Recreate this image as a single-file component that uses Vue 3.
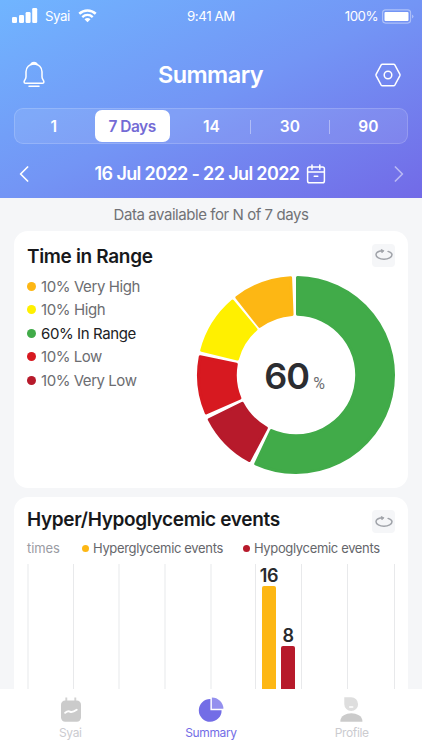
<script setup>
const ranges = [
  { label: '10% Very High', color: '#fdb714', from: 321.8, to: 357.7 },
  { label: '10% High', color: '#fff000', from: 283.8, to: 320.2 },
  { label: '60% In Range', color: '#41ab49', from: 0, to: 205.3, strong: true },
  { label: '10% Low', color: '#d71920', from: 246.2, to: 281.7 },
  { label: '10% Very Low', color: '#b71a2b', from: 207.8, to: 243.7 },
]

// Ring segment, inset on all sides so a round-joined stroke can soften its corners
function segment(from, to) {
  const inset = 1.5
  const outer = 99 - inset
  const inner = 59.2 + inset
  const point = (r, angle, side) => {
    const a = (angle * Math.PI) / 180 + side * Math.asin(inset / r)
    return `${(r * Math.sin(a)).toFixed(2)} ${(-r * Math.cos(a)).toFixed(2)}`
  }
  const large = to - from > 180 ? 1 : 0
  return `M${point(outer, from, 1)}A${outer} ${outer} 0 ${large} 1 ${point(outer, to, -1)}L${point(inner, to, -1)}A${inner} ${inner} 0 ${large} 0 ${point(inner, from, 1)}Z`
}

const periods = ['1', '7 Days', '14', '30', '90']
const days = [
  { soft: true }, {}, { soft: true }, { soft: true }, { soft: true },
  { high: 16, low: 8 }, {}, {}, {},
]
</script>

<template>
  <div class="screen">
    <header class="top">
      <div class="status">
        <div class="carrier">
          <svg width="26" height="16" viewBox="0 0 26 16" fill="#fff">
            <rect x="0" y="9" width="5" height="6" rx="1.3" />
            <rect x="7" y="7" width="5" height="8" rx="1.3" />
            <rect x="13.6" y="4" width="5" height="11" rx="1.3" />
            <rect x="20.2" y="0" width="5" height="15" rx="1.3" />
          </svg>
          <span class="network">Syai</span>
          <svg class="wifi" width="19" height="14" viewBox="0 0 20 15" fill="none" stroke="#fff">
            <path d="M1.2 5.1C6.2.4 13.8.4 18.8 5.1" stroke-width="2.7" />
            <path d="M4.4 8.6c3.2-3 8-3 11.2 0" stroke-width="2.5" />
            <path d="M6.8 11c1.9-1.7 4.5-1.7 6.4 0L10 14.1Z" fill="#fff" stroke="none" />
          </svg>
        </div>
        <span class="clock">9:41 AM</span>
        <div class="power">
          <span>100%</span>
          <svg width="32" height="15" viewBox="0 0 32 15" fill="none">
            <rect x=".6" y=".9" width="28" height="13.2" rx="3" stroke="#fff" stroke-opacity=".42" stroke-width="1.1" />
            <rect x="2.5" y="2.9" width="24" height="9.2" rx="1" fill="#fff" />
            <path d="M30 5.5q3 2 0 4z" fill="#fff" fill-opacity=".42" />
          </svg>
        </div>
      </div>

      <div class="heading">
        <svg width="22" height="28" viewBox="0 0 22 28" fill="none" stroke="#fff" stroke-width="1.5" stroke-linecap="round" stroke-linejoin="round">
          <path d="M8.1 3.6C8.5.8 13.5.8 13.9 3.6" fill="#fff" />
          <path d="M11 3.1c-4.7 0-8 3.4-8 7.7v4.9c0 2.5-1.9 3.5-1.9 5.2 0 .8.5 1.3 1.4 1.3h17c.9 0 1.4-.5 1.4-1.3 0-1.7-1.9-2.7-1.9-5.2v-4.9c0-4.3-3.3-7.7-8-7.7Z" />
          <path d="M6 25.2h10" />
        </svg>
        <h1>Summary</h1>
        <svg width="26" height="24" viewBox="0 0 26 24" fill="none" stroke="#fff" stroke-width="1.5" stroke-linejoin="round">
          <path d="M7.4 1.2h11.2q.8 0 1.2.7l5 9.3q.4.8 0 1.6l-5 9.3q-.4.7-1.2.7H7.4q-.8 0-1.2-.7l-5-9.3q-.4-.8 0-1.6l5-9.3q.4-.7 1.2-.7Z" />
          <circle cx="13" cy="12" r="3.8" />
        </svg>
      </div>

      <nav class="periods">
        <button v-for="(p, i) in periods" :key="p" :class="{ active: i === 1, divided: i > 2 }">{{ p }}</button>
      </nav>

      <div class="dates">
        <svg width="10" height="16" viewBox="0 0 10 16" fill="none" stroke="#fff" stroke-width="1.7" stroke-linecap="round" stroke-linejoin="round"><path d="m8.6 1-7 7 7 7" /></svg>
        <div class="range">
          <span>16 Jul 2022 - 22 Jul 2022</span>
          <svg width="20" height="20" viewBox="0 0 20 20" fill="none" stroke="#fff" stroke-width="1.5" stroke-linecap="round">
            <rect x="1.6" y="3" width="16.8" height="15.7" rx="1.8" />
            <path d="M1.8 8h16.4M6 1v4.3M13.8 1v4.3M8.2 12.3h3.6" />
          </svg>
        </div>
        <svg class="next" width="10" height="16" viewBox="0 0 10 16" fill="none" stroke="#fff" stroke-width="1.7" stroke-linecap="round" stroke-linejoin="round"><path d="m1.4 1 7 7-7 7" /></svg>
      </div>
    </header>

    <main>
      <p class="note">Data available for N of 7 days</p>

      <section class="card time">
        <div class="card-head">
          <h2>Time in Range</h2>
          <button class="rotate">
            <svg width="18" height="12" viewBox="0 0 18 12" fill="none" stroke="#a0a3a9" stroke-width="1.5" stroke-linecap="round" stroke-linejoin="round">
              <path d="M13.1 2.4c2.4.7 3.9 1.8 3.9 3.4 0 2.5-3.6 4.4-8 4.4S1 8.3 1 5.8c0-2.2 2.6-3.6 6-4" />
              <path d="M6.6.7 8.9 1.8 7.2 3.5Z" fill="#a0a3a9" stroke-width="1" />
            </svg>
          </button>
        </div>
        <div class="breakdown">
          <ul>
            <li v-for="r in ranges" :key="r.label" :class="{ strong: r.strong }">
              <i :style="{ background: r.color }"></i>{{ r.label }}
            </li>
          </ul>
          <div class="donut">
            <svg width="200" height="200" viewBox="-100 -100 200 200">
              <path v-for="r in ranges" :key="r.label" :d="segment(r.from, r.to)" :fill="r.color" :stroke="r.color" stroke-width="3" stroke-linejoin="round" />
            </svg>
            <div class="total"><b>60</b><span>%</span></div>
          </div>
        </div>
      </section>

      <section class="card events">
        <div class="card-head">
          <h2>Hyper/Hypoglycemic events</h2>
          <button class="rotate">
            <svg width="18" height="12" viewBox="0 0 18 12" fill="none" stroke="#a0a3a9" stroke-width="1.5" stroke-linecap="round" stroke-linejoin="round">
              <path d="M13.1 2.4c2.4.7 3.9 1.8 3.9 3.4 0 2.5-3.6 4.4-8 4.4S1 8.3 1 5.8c0-2.2 2.6-3.6 6-4" />
              <path d="M6.6.7 8.9 1.8 7.2 3.5Z" fill="#a0a3a9" stroke-width="1" />
            </svg>
          </button>
        </div>
        <div class="legend">
          <span class="unit">times</span>
          <span class="key hyper"><i></i>Hyperglycemic events</span>
          <span class="key hypo"><i></i>Hypoglycemic events</span>
        </div>
        <div class="chart">
          <div v-for="(d, i) in days" :key="i" class="day" :class="{ soft: d.soft }">
            <template v-if="d.high">
              <div class="bar high"><b>{{ d.high }}</b><i></i></div>
              <div class="bar low"><b>{{ d.low }}</b><i></i></div>
            </template>
          </div>
        </div>
      </section>
    </main>

    <footer>
      <a class="tab">
        <svg width="20" height="26" viewBox="0 0 20 26">
          <path d="M5.3.5v5M14.3.5v5" stroke="#d2d2d2" stroke-width="1.9" />
          <rect x="0" y="3.6" width="20" height="21.2" rx="4.2" fill="#cbcbcb" />
          <path d="M4.2 15.8c2.1-1.8 3.3-2.1 4.7-1.2 1.9 1.3 3.9.2 6.8-1.8" fill="none" stroke="#fff" stroke-width="2" stroke-linecap="round" />
        </svg>
        <span>Syai</span>
      </a>
      <a class="tab active">
        <svg width="26" height="26" viewBox="0 0 26 26">
          <path d="M12.4 2v11.2h11.2A11.4 11.4 0 1 1 12.4 2Z" fill="#736de6" />
          <path d="M13.9.4A11.6 11.6 0 0 1 25.4 11.8H13.9Z" fill="#9490ee" />
        </svg>
        <span>Summary</span>
      </a>
      <a class="tab">
        <svg width="24" height="26" viewBox="0 0 24 26">
          <path d="M4.3.3h6.9a6.9 6.9 0 1 1-6.9 6.9Z" fill="#dedede" />
          <path d="M9.7 10h3" fill="none" stroke="#fff" stroke-width="1.5" stroke-linecap="round" />
          <path d="M.4 24.7v-.9C.4 19 6 16.2 11.3 16.2s11.1 2.8 11.1 7.6v.9Z" fill="#cbcbcb" />
        </svg>
        <span>Profile</span>
      </a>
    </footer>
  </div>
</template>

<style>
body { margin: 0; }
</style>

<style scoped>
* { box-sizing: border-box; }
.screen {
  display: flex;
  flex-direction: column;
  width: 422px;
  height: 750px;
  overflow: hidden;
  background: #f5f6f8;
  font-family: Inter, "Liberation Sans", sans-serif;
  white-space: nowrap;
}
h1, h2, p, ul { margin: 0; padding: 0; }
button { border: 0; padding: 0; background: none; font: inherit; }
svg { display: block; flex: none; }
.top {
  flex: none;
  height: 198px;
  color: #fff;
  background: linear-gradient(to bottom right, #70b5ff 0%, #7395f5 50%, #726ae7 100%);
}
.status {
  display: grid;
  grid-template-columns: 1fr auto 1fr;
  align-items: center;
  height: 32px;
  padding: 0 8px 0 12px;
  font-size: 13.3px;
}
.carrier { display: flex; align-items: center; }
.network { margin: 0 8px 0 7px; letter-spacing: -.5px; }
.clock { margin-right: 4px; letter-spacing: -.4px; }
.power { display: flex; align-items: center; justify-content: flex-end; gap: 4px; letter-spacing: -.5px; }
.heading {
  display: flex;
  align-items: center;
  justify-content: space-between;
  height: 76px;
  padding: 10px 21px 0 23px;
}
h1 { padding-left: 1px; font-size: 23.5px; line-height: 28px; font-weight: 600; letter-spacing: -.55px; }
.periods {
  display: grid;
  grid-template-columns: repeat(5, 1fr);
  height: 36px;
  margin: 0 14px;
  border: 1px solid #ffffff2b;
  border-radius: 9px;
  background: #ffffff18;
}
.periods button { position: relative; color: #fff; font-size: 15.5px; font-weight: 600; }
.periods button:first-child { padding-right: 1px; }
.periods button:nth-child(n + 3) { padding-left: 1px; }
.periods .active { margin: 1px 1.5px; padding-right: 1px; border-radius: 7px; background: #fff; color: #746bd5; letter-spacing: -.5px; }
.periods .divided::before { content: ""; position: absolute; left: 0; top: 11px; width: 1px; height: 14px; background: #ffffff60; }
.dates { display: flex; align-items: center; justify-content: space-between; height: 54px; padding: 5px 18px 0 19px; }
.range { display: flex; align-items: center; gap: 7px; margin-right: 2px; font-size: 18px; font-weight: 600; letter-spacing: -.63px; }
.next { opacity: .5; }
main { flex: 1; min-height: 0; overflow: hidden; padding: 0 14px; }
.note { height: 32.5px; line-height: 33px; text-align: center; font-size: 15px; color: #717276; letter-spacing: -.44px; }
.card { border-radius: 14px; background: #fff; padding: 13px 13px 0; }
.time { height: 257.5px; }
.events { height: 300px; margin-top: 9px; }
.card-head { display: flex; justify-content: space-between; height: 30px; }
h2 { font-size: 19px; line-height: 26px; font-weight: 600; letter-spacing: -.34px; color: #17181b; }
.events h2 { margin-top: -3px; }
.rotate { display: flex; align-items: center; justify-content: center; width: 23px; height: 23px; border-radius: 4px; background: #f5f6f8; }
.breakdown { display: flex; justify-content: space-between; }
ul { list-style: none; padding-top: .8px; }
li { display: flex; align-items: center; gap: 5px; height: 23.6px; font-size: 15px; color: #6c6d71; letter-spacing: -.4px; }
li:nth-child(n + 4) { letter-spacing: -.45px; }
li.strong { color: #202124; }
li i { width: 9px; height: 9px; border-radius: 50%; }
.donut { display: grid; align-items: center; justify-items: center; width: 200px; height: 200px; margin: 1.4px -1px 0 0; }
.donut > * { grid-area: 1 / 1; }
.total { display: flex; align-items: baseline; gap: 4px; padding: 2px 3px 0 0; color: #2c2d31; }
.total b { font-size: 36px; line-height: 40px; font-weight: 600; letter-spacing: -.9px; }
.total span { font-family: Roboto, Inter, sans-serif; font-size: 16px; color: #6c6d71; }
.legend { display: flex; align-items: center; height: 16px; font-size: 13px; letter-spacing: -.34px; color: #65666b; }
.unit { width: 55px; letter-spacing: -.1px; color: #9a9ba3; }
.key { display: flex; align-items: center; gap: 4px; }
.key i { width: 7px; height: 7px; border-radius: 50%; background: #fdb714; }
.hypo { margin-left: 20px; }
.hypo i { background: #b71a2b; }
.chart { display: flex; height: 126px; margin-top: 8px; }
.day { display: flex; align-items: flex-end; flex: 0 0 46px; border-left: 1px solid #e8e9eb; padding-left: 6px; gap: 5px; }
.day.soft { border-left: 2px solid #f3f4f5; }
.day:nth-child(2), .day:nth-child(5) { flex-basis: 45px; }
.day:nth-child(8) { flex-basis: 47px; }
.day:last-child { flex-basis: 1px; padding: 0; }
.bar { display: flex; flex-direction: column; align-items: center; width: 14px; }
.bar b { font-size: 18px; line-height: 20px; font-weight: 600; letter-spacing: -.3px; color: #292a2d; }
.bar i { width: 14px; border-radius: 2px 2px 0 0; }
.high i { height: 104.5px; background: #fdb714; }
.low i { height: 44px; background: #b71a2b; }
footer { display: grid; grid-template-columns: repeat(3, 1fr); flex: none; height: 61px; background: #fff; }
.tab { display: flex; flex-direction: column; align-items: center; padding-top: 8px; font-size: 12px; line-height: 19px; letter-spacing: -.35px; color: #cbcbcf; }
.tab:first-child svg { margin-left: 1px; }
.tab.active { color: #736de6; }
</style>
